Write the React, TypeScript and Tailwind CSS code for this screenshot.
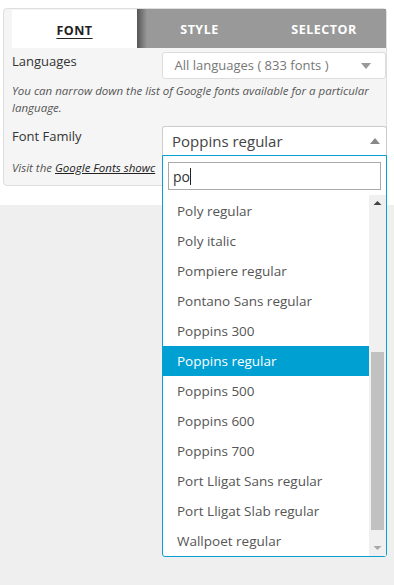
const fonts = [
  "Poly regular",
  "Poly italic",
  "Pompiere regular",
  "Pontano Sans regular",
  "Poppins 300",
  "Poppins regular",
  "Poppins 500",
  "Poppins 600",
  "Poppins 700",
  "Port Lligat Sans regular",
  "Port Lligat Slab regular",
  "Wallpoet regular",
];

export default function App() {
  return (
    <div className="relative w-[394px] h-[585px] overflow-hidden bg-[#efefef] font-['Open_Sans',sans-serif]">
      <div className="bg-white h-[205px] pt-[8px] pl-[3px]">
        <div className="w-[384px] h-[178px] border border-[#dedede] bg-[#f5f5f5] rounded-sm">
          {/* tabs */}
          <div className="flex ml-[8px] h-[39px] text-[12.5px] font-bold tracking-[0.5px]">
            <div className="w-[125px] mt-[1px] pt-[4px] bg-white flex items-center justify-center text-[#222]">
              <span className="underline underline-offset-[3px]">FONT</span>
            </div>
            <div className="flex flex-1 pt-[4px] bg-[linear-gradient(to_right,#555,#999_10px)] text-white">
              <div className="w-[125px] flex items-center justify-center">STYLE</div>
              <div className="flex-1 flex items-center justify-center">SELECTOR</div>
            </div>
          </div>

          <div className="flex mt-[4px] pl-[8px]">
            <div className="w-[150px] text-[13px] text-[#333]">Languages</div>
            <div className="flex items-center justify-between w-[225px] h-[27px] border border-[#ddd] rounded-[3px] bg-white px-[12px] text-[13px] text-[#777]">
              <span>All languages ( 833 fonts )</span>
              <svg width="10" height="6" viewBox="0 0 10 6" className="mr-[2px]">
                <path d="M0 0 L10 0 L5 6 Z" fill="#999" />
              </svg>
            </div>
          </div>

          <p className="pl-[8px] pr-[8px] mt-[3px] text-[11.5px] leading-[17px] italic text-[#555]">
            You can narrow down the list of Google fonts available for a particular language.
          </p>

          <div className="flex mt-[8px] pl-[8px]">
            <div className="w-[150px] pt-[3px] text-[13px] text-[#333]">Font Family</div>
            <div className="w-[225px] h-[29px]" />
          </div>

          <div className="pl-[8px] mt-[6px] w-[158px] overflow-hidden">
            <p className="text-[11.5px] italic text-[#555] whitespace-nowrap">
              Visit the <span className="underline text-[#222]">Google Fonts showc</span>
            </p>
          </div>
        </div>
      </div>

      {/* open select */}
      <div className="absolute left-[162px] top-[126px] w-[225px]">
        <div className="flex items-center justify-between h-[29px] border border-[#ccc] border-b-0 rounded-t-[3px] bg-white pl-[9px] pr-[6px] text-[15px] text-[#444]">
          <span>Poppins regular</span>
          <svg width="10" height="6" viewBox="0 0 10 6">
            <path d="M0 6 L10 6 L5 0 Z" fill="#888" />
          </svg>
        </div>
        <div className="border border-[#0a9fd3] rounded-b-[3px] bg-white h-[402px] flex flex-col">
          <div className="px-[5px] pt-[6px] pb-[5px]">
            <div className="h-[28px] border border-[#aaa] flex items-center pl-[4px] text-[14px] text-[#333]">
              po<span className="w-px h-[17px] bg-[#222]" />
            </div>
          </div>
          <div className="flex flex-1 min-h-0">
            <ul className="flex-1 pt-[1px]">
              {fonts.map((f) => (
                <li
                  key={f}
                  className={
                    f === "Poppins regular"
                      ? "h-[30px] flex items-center pl-[14px] text-[13.5px] bg-[#00a0d2] text-white"
                      : "h-[30px] flex items-center pl-[14px] text-[13.5px] text-[#555]"
                  }
                >
                  {f}
                </li>
              ))}
            </ul>
            <div className="w-[17px] bg-[#f0f0f0] flex flex-col items-center">
              <svg width="17" height="16" viewBox="0 0 17 16">
                <path d="M4.5 10 L12.5 10 L8.5 6 Z" fill="#444" />
              </svg>
              <div className="flex-1 w-full pt-[141px] pb-[10px] px-[2px] flex flex-col">
                <div className="flex-1 bg-[#c1c1c1]" />
              </div>
              <svg width="17" height="16" viewBox="0 0 17 16">
                <path d="M4.5 6 L12.5 6 L8.5 10 Z" fill="#a8a8a8" />
              </svg>
            </div>
          </div>
        </div>
      </div>
    </div>
  );
}
